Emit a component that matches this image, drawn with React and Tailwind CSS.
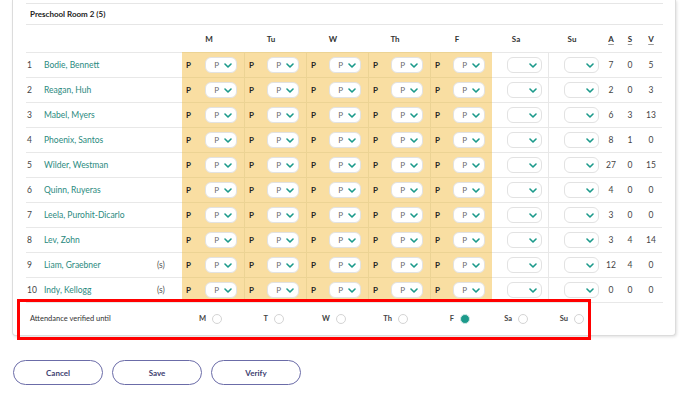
import React from 'react';

const rows = [
  { n: 1, name: 'Bodie, Bennett', s: false, a: 7, sb: 0, v: 5 },
  { n: 2, name: 'Reagan, Huh', s: false, a: 2, sb: 0, v: 3 },
  { n: 3, name: 'Mabel, Myers', s: false, a: 6, sb: 3, v: 13 },
  { n: 4, name: 'Phoenix, Santos', s: false, a: 8, sb: 1, v: 0 },
  { n: 5, name: 'Wilder, Westman', s: false, a: 27, sb: 0, v: 15 },
  { n: 6, name: 'Quinn, Ruyeras', s: false, a: 4, sb: 0, v: 0 },
  { n: 7, name: 'Leela, Purohit-Dicarlo', s: false, a: 3, sb: 0, v: 0 },
  { n: 8, name: 'Lev, Zohn', s: false, a: 3, sb: 4, v: 14 },
  { n: 9, name: 'Liam, Graebner', s: true, a: 12, sb: 4, v: 0 },
  { n: 10, name: 'Indy, Kellogg', s: true, a: 0, sb: 0, v: 0 },
];

const weekdays = ['M', 'Tu', 'W', 'Th', 'F'];
const grid = 'grid grid-cols-[18px_110px_28px_62px_62px_62px_62px_62px_56px_54px_18px_20px_22px]';

const Chevron = () => (
  <svg width="8" height="5" viewBox="0 0 8 5" className="shrink-0">
    <path d="M1 1 L4 4 L7 1" fill="none" stroke="#1c9a8b" strokeWidth="1.6" strokeLinecap="round" strokeLinejoin="round" />
  </svg>
);

const Select = ({ value, wide }) => (
  <div className={`flex h-[16px] items-center justify-end gap-[5px] rounded-[6px] border border-[#e2e2e2] bg-white pr-[4px] ${wide ? 'w-[35px]' : 'w-[32px]'}`}>
    {value && <span className="text-[8px] leading-none text-[#6b6b6b]">{value}</span>}
    <Chevron />
  </div>
);

const Radio = ({ checked }) => (
  <span className={`inline-block h-[10px] w-[10px] rounded-full border ${checked ? 'border-[#cfe9e5] bg-[#1c9a8b]' : 'border-[#d4d4d4] bg-white'}`} />
);

export default function App() {
  return (
    <div className="relative h-[393px] w-[688px] overflow-hidden bg-white font-['Lato',_sans-serif] text-[#333]">
      {/* card */}
      <div className="ml-[12px] w-[664px] rounded-b-[4px] border-x border-b border-[#dcdcdc] bg-white pl-[13px] pr-[12px] pt-[3px] shadow-[1px_1px_3px_rgba(0,0,0,0.12)]">
        <div className="flex h-[21px] items-center border-t border-[#e6e6e6] pl-[4px] text-[8px] font-bold text-[#222]">
          Preschool Room 2 (5)
        </div>

        {/* column headers */}
        <div className={`${grid} h-[28px] border-t border-[#e6e6e6] text-[8px] font-bold text-[#333]`}>
          <div className="col-span-3" />
          {weekdays.map((d) => (
            <div key={d} className="flex items-center justify-center pr-[8px]">{d}</div>
          ))}
          <div className="flex items-center justify-center pr-[8px]">Sa</div>
          <div className="flex items-center justify-center pr-[6px]">Su</div>
          <div className="flex items-center justify-center underline decoration-[#999] underline-offset-2">A</div>
          <div className="flex items-center justify-center underline decoration-[#999] underline-offset-2">S</div>
          <div className="flex items-center justify-center underline decoration-[#999] underline-offset-2">V</div>
        </div>

        {/* student rows */}
        {rows.map((r) => (
          <div key={r.n} className={`${grid} h-[25px] text-[8.5px]`}>
            <div className="flex items-center border-t border-[#e8e8e8] pl-[1px] text-[#444]">{r.n}</div>
            <div className="flex items-center border-t border-[#e8e8e8] text-[#2b8a80]">{r.name}</div>
            <div className="flex items-center border-t border-[#e8e8e8] pl-[3px] text-[#555]">{r.s ? '(s)' : ''}</div>
            {weekdays.map((d, i) => (
              <div
                key={d}
                className={`flex items-center justify-between border-t border-[#ecd394] bg-[#f9dea2] pl-[4px] pr-[7px] ${i > 0 ? 'border-l' : ''}`}
              >
                <span className="text-[8px] font-bold text-[#222]">P</span>
                <Select value="P" />
              </div>
            ))}
            <div className="flex items-center border-t border-[#e8e8e8] pl-[15px]">
              <Select wide />
            </div>
            <div className="flex items-center border-l border-t border-[#e8e8e8] pl-[15px]">
              <Select wide />
            </div>
            <div className="flex items-center justify-center border-t border-[#e8e8e8] text-[#444]">{r.a}</div>
            <div className="flex items-center justify-center border-t border-[#e8e8e8] text-[#444]">{r.sb}</div>
            <div className="flex items-center justify-center border-t border-[#e8e8e8] text-[#444]">{r.v}</div>
          </div>
        ))}

        {/* verification row */}
        <div className={`${grid} h-[33px] border-t border-[#e8e8e8] text-[7.5px]`}>
          <div className="col-span-3 flex items-center pl-[4px] text-[#333]">Attendance verified until</div>
          {['M', 'T', 'W', 'Th', 'F', 'Sa', 'Su'].map((d, i) => (
            <div key={d} className={`flex items-center justify-end gap-[6px] ${i === 6 ? 'pr-[18px]' : i === 5 ? 'pr-[20px]' : 'pr-[22px]'}`}>
              <span className="font-bold text-[#444]">{d}</span>
              <Radio checked={d === 'F'} />
            </div>
          ))}
        </div>
      </div>

      {/* highlight annotation */}
      <div className="pointer-events-none absolute left-[17px] top-[299px] h-[41px] w-[574px] border-[3px] border-[#ff0000]" />

      {/* actions */}
      <div className="ml-[13px] mt-[24px] flex gap-[9px]">
        {['Cancel', 'Save', 'Verify'].map((b) => (
          <button
            key={b}
            className="h-[25px] w-[90px] rounded-full border-[1.5px] border-[#6b6ca8] bg-white text-[8px] font-bold text-[#3d4070]"
          >
            {b}
          </button>
        ))}
      </div>
    </div>
  );
}
